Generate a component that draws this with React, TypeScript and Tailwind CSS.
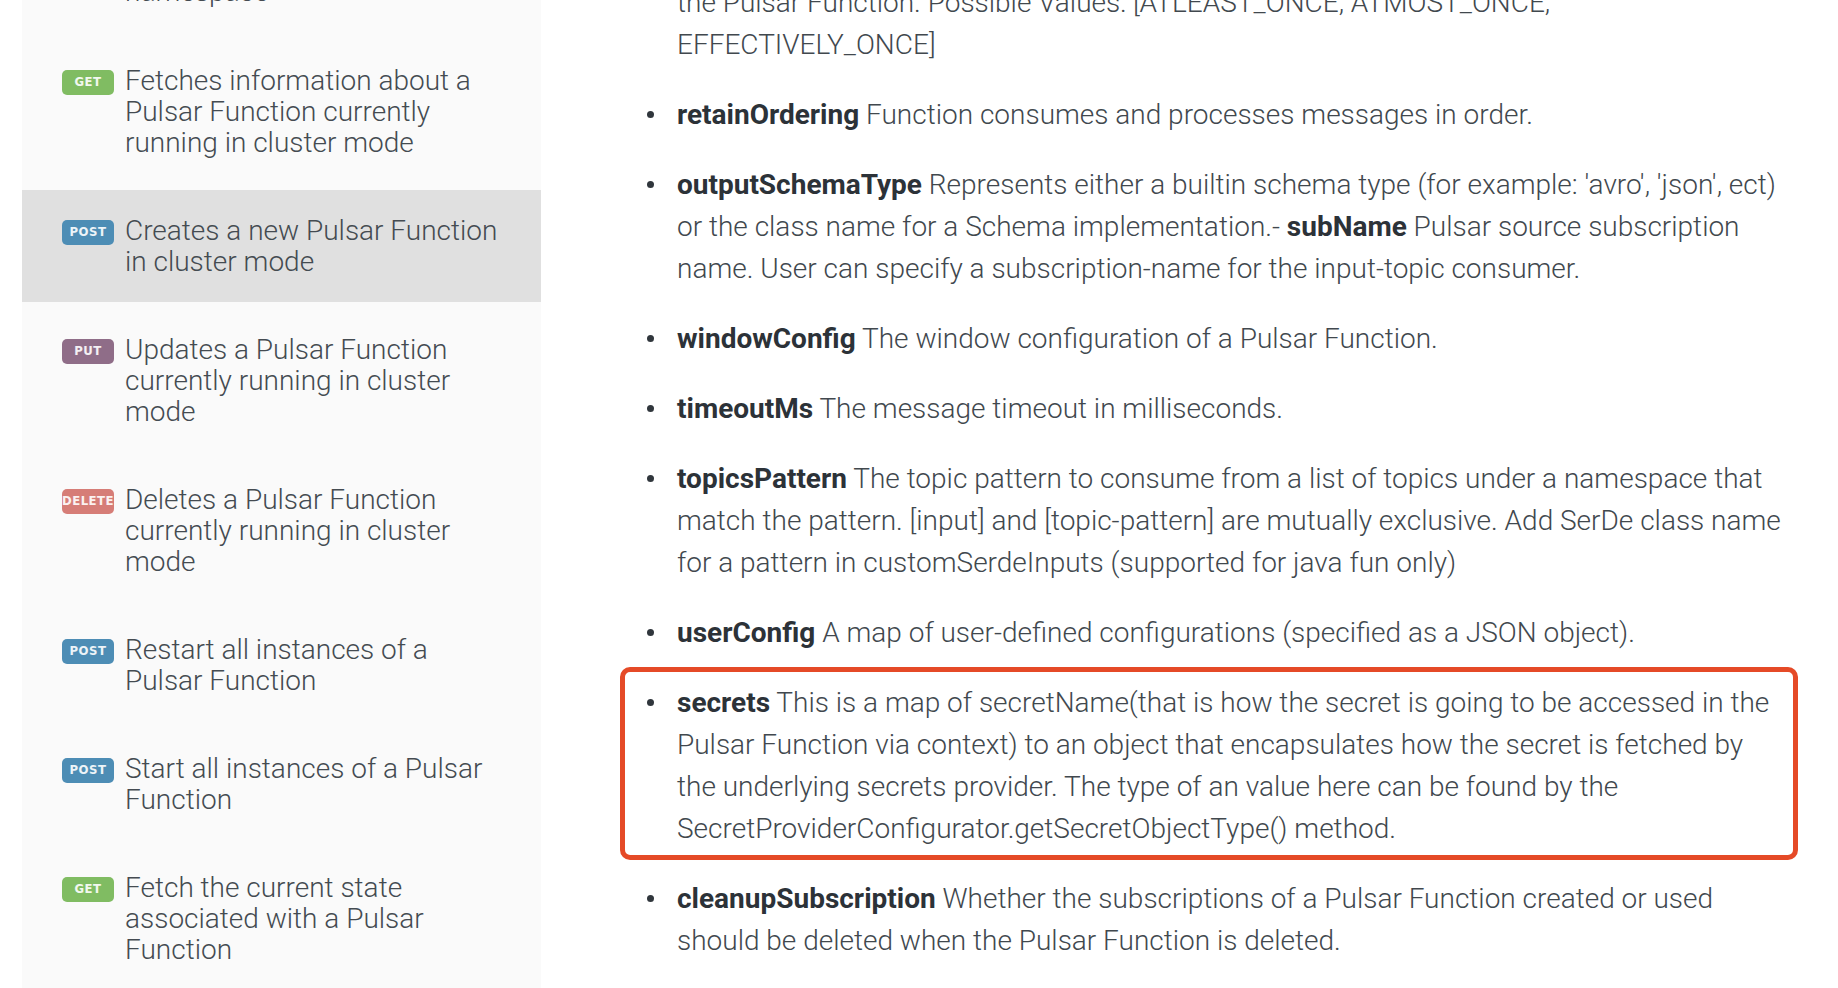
import React from 'react';

type Method = 'GET' | 'POST' | 'PUT' | 'DELETE';

const badgeColor: Record<Method, string> = {
  GET: 'bg-[#80bc62]',
  POST: 'bg-[#4d8db5]',
  PUT: 'bg-[#8f6d88]',
  DELETE: 'bg-[#d67d77]',
};

const navItems: { method: Method; label: string; active?: boolean }[] = [
  { method: 'GET', label: 'Fetches information about a Pulsar Function currently running in cluster mode' },
  { method: 'POST', label: 'Creates a new Pulsar Function in cluster mode', active: true },
  { method: 'PUT', label: 'Updates a Pulsar Function currently running in cluster mode' },
  { method: 'DELETE', label: 'Deletes a Pulsar Function currently running in cluster mode' },
  { method: 'POST', label: 'Restart all instances of a Pulsar Function' },
  { method: 'POST', label: 'Start all instances of a Pulsar Function' },
  { method: 'GET', label: 'Fetch the current state associated with a Pulsar Function' },
];

function Badge({ method }: { method: Method }) {
  return (
    <span
      className={`mt-[5px] flex h-[25px] w-[52px] shrink-0 items-center justify-center rounded-[5px] text-[13px] font-bold uppercase tracking-[0.5px] text-white/90 font-['DejaVu_Sans_Condensed','DejaVu_Sans',sans-serif] ${badgeColor[method]}`}
    >
      {method}
    </span>
  );
}

function NavRow({ method, label, active }: { method: Method; label: string; active?: boolean }) {
  return (
    <li className={`flex gap-[11px] py-[25px] pl-[40px] pr-[40px] ${active ? 'bg-[#e0e0e0]' : ''}`}>
      <Badge method={method} />
      <span className="text-[28px] leading-[31px] text-[#444b51]">{label}</span>
    </li>
  );
}

function Bullet() {
  return (
    <span className="flex h-[42px] w-[30px] shrink-0 items-center">
      <span className="h-[7px] w-[7px] rounded-full bg-[#30363c]" />
    </span>
  );
}

function Term({ children }: { children: React.ReactNode }) {
  return <strong className="font-bold text-[#2c3238]">{children}</strong>;
}

export default function App() {
  return (
    <div className="flex h-[988px] w-[1838px] overflow-hidden bg-white font-['Roboto',sans-serif] font-light text-[#41484e]">
      {/* sidebar */}
      <aside className="ml-[22px] w-[519px] shrink-0 overflow-hidden bg-[#fafafa]">
        {/* previous entry, scrolled mostly out of view */}
        <div className="flex h-[32px] flex-col justify-end overflow-hidden">
          <div className="flex gap-[11px] pb-[25px] pl-[40px] pr-[40px]">
            <span className="w-[52px] shrink-0" />
            <span className="text-[28px] leading-[31px] text-[#444b51]">namespace</span>
          </div>
        </div>
        <ul className="mt-[7.5px] flex flex-col gap-[7px]">
          {navItems.map((item, i) => (
            <NavRow key={i} {...item} />
          ))}
        </ul>
      </aside>

      {/* main content */}
      <main className="ml-[106px] flex-1">
        <ul className="mt-[-18.5px] flex w-[1140px] flex-col gap-[28px] text-[28px] leading-[42px]">
          <li className="flex">
            <span className="w-[30px] shrink-0" />
            <p>
              the Pulsar Function. Possible Values: [ATLEAST_ONCE, ATMOST_ONCE,
              <br />
              EFFECTIVELY_ONCE]
            </p>
          </li>
          <li className="flex">
            <Bullet />
            <p>
              <Term>retainOrdering</Term> Function consumes and processes messages in order.
            </p>
          </li>
          <li className="flex">
            <Bullet />
            <p>
              <Term>outputSchemaType</Term> Represents either a builtin schema type (for example: 'avro', 'json', ect)
              or the class name for a Schema implementation.- <Term>subName</Term> Pulsar source subscription
              name. User can specify a subscription-name for the input-topic consumer.
            </p>
          </li>
          <li className="flex">
            <Bullet />
            <p>
              <Term>windowConfig</Term> The window configuration of a Pulsar Function.
            </p>
          </li>
          <li className="flex">
            <Bullet />
            <p>
              <Term>timeoutMs</Term> The message timeout in milliseconds.
            </p>
          </li>
          <li className="flex">
            <Bullet />
            <p>
              <Term>topicsPattern</Term> The topic pattern to consume from a list of topics under a namespace that
              match the pattern. [input] and [topic-pattern] are mutually exclusive. Add SerDe class name for a
              pattern in customSerdeInputs (supported for java fun only)
            </p>
          </li>
          <li className="flex">
            <Bullet />
            <p>
              <Term>userConfig</Term> A map of user-defined configurations (specified as a JSON object).
            </p>
          </li>
          <li className="relative flex">
            {/* highlight annotation */}
            <span className="pointer-events-none absolute bottom-[-10px] left-[-27px] right-[-11px] top-[-15px] rounded-[10px] border-[5px] border-[#e54a27]" />
            <Bullet />
            <p>
              <Term>secrets</Term> This is a map of secretName(that is how the secret is going to be accessed in the
              Pulsar Function via context) to an object that encapsulates how the secret is fetched by the
              underlying secrets provider. The type of an value here can be found by the
              SecretProviderConfigurator.getSecretObjectType() method.
            </p>
          </li>
          <li className="flex">
            <Bullet />
            <p>
              <Term>cleanupSubscription</Term> Whether the subscriptions of a Pulsar Function created or used
              should be deleted when the Pulsar Function is deleted.
            </p>
          </li>
        </ul>
      </main>
    </div>
  );
}
